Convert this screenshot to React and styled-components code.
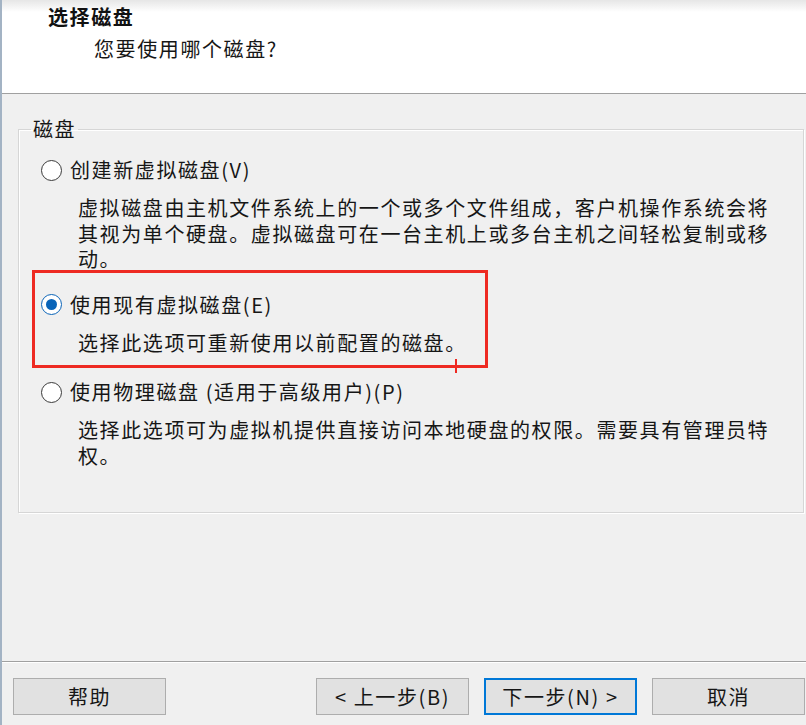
import React from "react";
import styled, { createGlobalStyle } from "styled-components";

const Global = createGlobalStyle`
  html, body { margin: 0; padding: 0; background: #f0f0f0; }
  body { font-family: "Noto Sans CJK SC", "Noto Sans", sans-serif; }
  * { box-sizing: border-box; }
`;

const Window = styled.div`
  width: 806px;
  height: 725px;
  display: flex;
  flex-direction: column;
  border-left: 2px solid #a3b3c4;
  background: #f0f0f0;
  color: #161616;
  font-size: 20px;
  letter-spacing: 1.6px;
  overflow: hidden;
`;

const Header = styled.header`
  flex: none;
  height: 94px;
  background: linear-gradient(#e6e6e6 0, #ffffff 12px);
  border-bottom: 1px solid #a0a0a0;
  padding: 5px 0 0 46px;
  display: flex;
  flex-direction: column;
`;

const Title = styled.div`
  font-weight: 700;
  line-height: 24px;
  color: #111;
`;

const Subtitle = styled.div`
  margin: 8px 0 0 46px;
  line-height: 24px;
`;

const Body = styled.main`
  flex: 1;
  padding: 25px 2px 0 16px;
`;

const Group = styled.fieldset`
  margin: 0;
  border: 1px solid #d6d6d6;
  box-shadow: inset 1px 1px 0 #ffffff, 1px 1px 0 #ffffff;
  padding: 0 0 44px 12px;
  min-inline-size: 0;
`;

const Legend = styled.legend`
  padding: 0 2px;
  line-height: 20px;
  font-size: 20px;
`;

const Options = styled.div`
  display: flex;
  flex-direction: column;
  padding-left: 10px;
`;

const Option = styled.div`
  position: relative;
  margin-top: ${(p) => p.$gap}px;
`;

const OptionRow = styled.label`
  display: flex;
  align-items: center;
  gap: 8px;
  height: 26px;
  line-height: 26px;
`;

const Radio = styled.span`
  flex: none;
  width: 21px;
  height: 21px;
  border-radius: 50%;
  background: #fff;
  border: 1.5px solid ${(p) => (p.$checked ? "#0a64b8" : "#3a3a3a")};
  display: flex;
  align-items: center;
  justify-content: center;
  &::after {
    content: "";
    width: 11px;
    height: 11px;
    border-radius: 50%;
    background: ${(p) => (p.$checked ? "#0a64b8" : "transparent")};
  }
`;

const Desc = styled.div`
  margin: 12px 0 0 37px;
  width: 700px;
  line-height: 25.5px;
`;

const Highlight = styled.div`
  position: absolute;
  top: -22px;
  left: -9px;
  width: 456px;
  height: 98px;
  border: 3px solid #ee2a22;
  pointer-events: none;
`;

const Caret = styled.div`
  position: absolute;
  left: 420px;
  top: 86px;
  width: 2px;
  height: 14px;
  background: #ee2a22;
`;

const Footer = styled.footer`
  flex: none;
  height: 64px;
  border-top: 1px solid #a0a0a0;
  box-shadow: inset 0 1px 0 #ffffff;
  padding: 16px 1px 0 11px;
  display: flex;
  align-items: flex-start;
  gap: 15px;
`;

const Button = styled.button`
  width: 153px;
  height: 37px;
  padding: 0;
  background: #e1e1e1;
  border: ${(p) => (p.$primary ? "2px solid #0078d7" : "1px solid #adadad")};
  font: inherit;
  font-size: 20px;
  letter-spacing: 1.6px;
  line-height: 1;
  color: #161616;
  margin-right: ${(p) => (p.$push ? "auto" : "0")};
`;

const options = [
  {
    label: "创建新虚拟磁盘(V)",
    desc: "虚拟磁盘由主机文件系统上的一个或多个文件组成，客户机操作系统会将其视为单个硬盘。虚拟磁盘可在一台主机上或多台主机之间轻松复制或移动。",
    gap: 18,
  },
  {
    label: "使用现有虚拟磁盘(E)",
    desc: "选择此选项可重新使用以前配置的磁盘。",
    gap: 20,
    checked: true,
    highlighted: true,
  },
  {
    label: "使用物理磁盘 (适用于高级用户)(P)",
    desc: "选择此选项可为虚拟机提供直接访问本地硬盘的权限。需要具有管理员特权。",
    gap: 24,
  },
];

export default function App() {
  return (
    <>
      <Global />
      <Window>
        <Header>
          <Title>选择磁盘</Title>
          <Subtitle>您要使用哪个磁盘?</Subtitle>
        </Header>
        <Body>
          <Group>
            <Legend>磁盘</Legend>
            <Options>
              {options.map((o) => (
                <Option key={o.label} $gap={o.gap}>
                  <OptionRow>
                    <Radio $checked={o.checked} />
                    <span>{o.label}</span>
                  </OptionRow>
                  <Desc>{o.desc}</Desc>
                  {o.highlighted && (
                    <Highlight>
                      <Caret />
                    </Highlight>
                  )}
                </Option>
              ))}
            </Options>
          </Group>
        </Body>
        <Footer>
          <Button $push>帮助</Button>
          <Button>&lt; 上一步(B)</Button>
          <Button $primary>下一步(N) &gt;</Button>
          <Button>取消</Button>
        </Footer>
      </Window>
    </>
  );
}
